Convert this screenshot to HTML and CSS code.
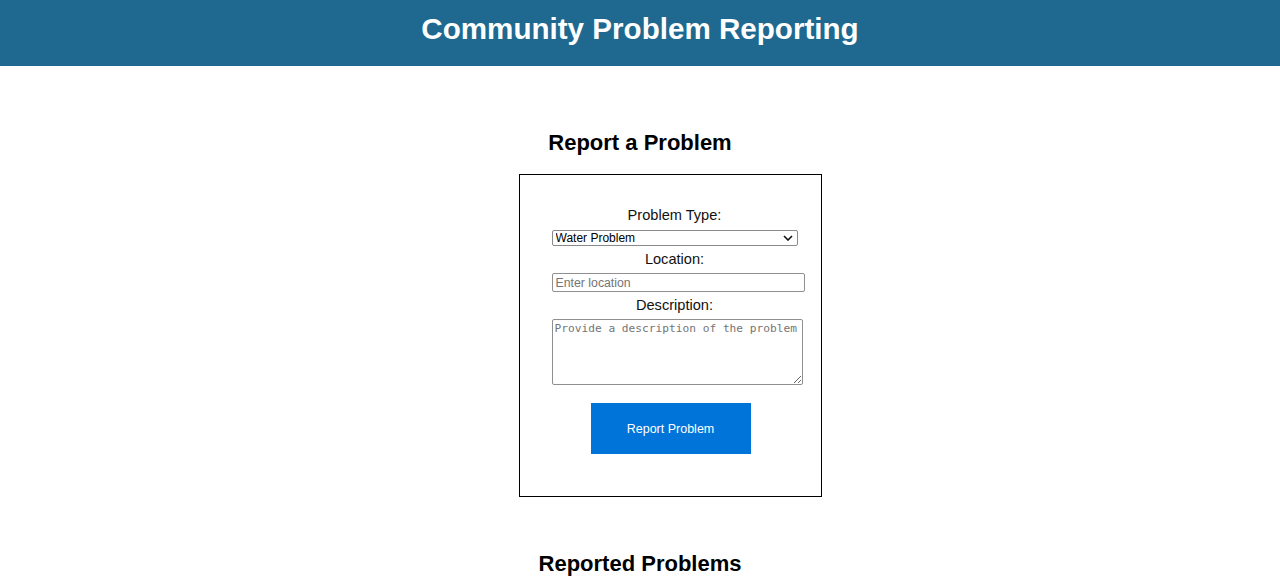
FILE: index.html
```html
<!DOCTYPE html>
<html>
<head>
<meta charset="utf-8">
<title>Community Problem Reporting</title>
<link rel="stylesheet" href="styles.css">
</head>
<body>
<header class="site-header">
  <h1 class="site-title">Community Problem Reporting</h1>
</header>
<main class="main">
  <section class="report-section">
    <h2 class="section-title">Report a Problem</h2>
    <form class="report-form">
      <label class="field-label" for="type">Problem Type:</label>
      <div class="select-wrap">
        <select id="type" class="field-select">
          <option>Water Problem</option>
          <option>Road Problem</option>
          <option>Electricity Problem</option>
        </select>
        <svg class="select-chevron" width="10" height="6" viewBox="0 0 10 6" aria-hidden="true">
          <path d="M1 1 L5 5 L9 1" fill="none" stroke="#111" stroke-width="1.6"/>
        </svg>
      </div>
      <label class="field-label" for="loc">Location:</label>
      <input id="loc" class="field-input" type="text" placeholder="Enter location">
      <label class="field-label" for="desc">Description:</label>
      <textarea id="desc" class="field-textarea" placeholder="Provide a description of the problem"></textarea>
      <button type="button" class="submit-btn">Report Problem</button>
    </form>
  </section>
  <section class="list-section">
    <h2 class="section-title list-title">Reported Problems</h2>
  </section>
</main>
</body>
</html>
```

FILE: styles.css
```css
html, body {
  margin: 0;
  padding: 0;
  background: #ffffff;
  font-family: "Liberation Sans", Arial, sans-serif;
  color: #000;
}

.site-header {
  background: #1f6990;
  height: 66px;
  display: flex;
  align-items: center;
  justify-content: center;
}

.site-title {
  margin: 0;
  color: #ffffff;
  font-size: 29.6px;
  font-weight: bold;
  line-height: 36px;
  position: relative;
  top: -4px;
}

.main {
  display: flex;
  flex-direction: column;
  align-items: center;
}

.report-section {
  display: flex;
  flex-direction: column;
  align-items: center;
}

.section-title {
  margin: 0;
  font-size: 22px;
  font-weight: bold;
  line-height: 28px;
}

.report-section .section-title {
  margin-top: 63px;
  margin-bottom: 17px;
}

.report-form {
  box-sizing: border-box;
  width: 303px;
  border: 1px solid #000;
  margin-left: 60px;
  padding: 32px 22px 42px 32px;
  display: flex;
  flex-direction: column;
  align-items: flex-start;
}

.field-label {
  display: block;
  width: 246px;
  text-align: center;
  font-size: 14.6px;
  line-height: 17px;
  color: #111;
}

.select-wrap {
  position: relative;
  width: 246px;
  height: 16px;
  margin: 6px 0 5px;
}

.field-select {
  -webkit-appearance: none;
  appearance: none;
  box-sizing: border-box;
  display: block;
  width: 246px;
  height: 16px;
  margin: 0;
  padding: 0 2px 0 3px;
  font-family: "Liberation Sans", Arial, sans-serif;
  font-size: 12px;
  line-height: 14px;
  border: 1px solid #8a8a8a;
  border-radius: 2px;
  background: #fff;
  color: #000;
}

.select-chevron {
  position: absolute;
  right: 5px;
  top: 5px;
  pointer-events: none;
}

.field-input {
  box-sizing: border-box;
  width: 253px;
  height: 19px;
  margin: 5px 0 5px;
  padding: 1px 3px;
  font-family: "Liberation Sans", Arial, sans-serif;
  font-size: 12.3px;
  border: 1px solid #8f8f8f;
  border-radius: 2px;
}

.field-input::placeholder {
  color: #757575;
}

.field-textarea {
  box-sizing: border-box;
  width: 251px;
  height: 66px;
  margin: 5px 0 0;
  padding: 2px 2px;
  font-family: "DejaVu Sans Mono", "Liberation Mono", monospace;
  font-size: 11.2px;
  line-height: 14px;
  border: 1px solid #8f8f8f;
  border-radius: 2px;
  resize: both;
}

.field-textarea::placeholder {
  color: #757575;
}

.submit-btn {
  align-self: center;
  margin: 18px 0 0 -9px;
  width: 160px;
  height: 51px;
  background: #0074d9;
  color: #ffffff;
  border: none;
  font-family: "Liberation Sans", Arial, sans-serif;
  font-size: 12.5px;
  cursor: pointer;
}

.list-section {
  display: flex;
  flex-direction: column;
  align-items: center;
}

.list-title {
  margin-top: 53px;
}
```
